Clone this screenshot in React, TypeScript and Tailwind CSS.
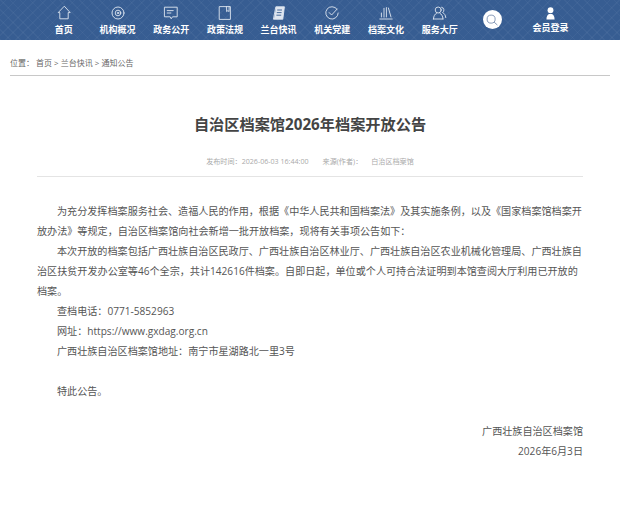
import type { ReactNode } from "react";

const cjk = "font-['Open_Sans','Noto_Sans_CJK_SC',sans-serif]";

function Ic({ children }: { children: ReactNode }) {
  return (
    <svg viewBox="0 0 16 16" className="h-[16px] w-[16px]" fill="none" stroke="#dfe6f0" strokeWidth="0.9" strokeLinejoin="round" strokeLinecap="round">
      {children}
    </svg>
  );
}

const navLeft: { name: string; icon: ReactNode }[] = [
  { name: "首页", icon: <path d="M8 1.5 2.2 7.600h1.600v6.200h8.400V7.600h1.600Z" /> },
  { name: "机构概况", icon: <><circle cx="8" cy="8" r="6" /><circle cx="8" cy="8" r="2.8" /><circle cx="8" cy="8" r="0.8" /></> },
  { name: "政务公开", icon: <><path d="M1.800 2.200h12.400v9.600H9.500l-1.300 2-1-2H1.800Z" /><path d="M4.200 5.600h6M4.200 8h3.600" /></> },
  { name: "政策法规", icon: <><path d="M2.600 1.600h10.800v12.800H2.600Z" /><path d="M9.600 1.600v5l1.300-1 1.200 1v-5" /></> },
  { name: "兰台快讯", icon: <><path d="M5.200 1.800h8.200l-1.600 12.400H2.800Z" fill="#dfe6f0" /><path d="M6.600 5h4M6.200 7.600h4M5.800 10.200h4" stroke="#365c91" /></> },
  { name: "机关党建", icon: <><path d="M13 4.200A6.200 6.200 0 1 0 14.200 8" /><path d="m5.200 7.600 2.400 2.400 5.600-6" /></> },
  { name: "档案文化", icon: <><path d="M1.800 14h12.400M3.400 12V8M6 12V3.400M8.400 12V2.600M10.400 3l2.600 9" /></> },
  { name: "服务大厅", icon: <><circle cx="6.200" cy="5" r="3" /><path d="M1.400 14c.3-3.200 1.400-5 3-5.600M11 14c-.3-3.200-1.400-5-3-5.600M1.400 14H11" /><path d="M9.600 2.200a3 3 0 0 1 1 5.400c1.700.7 2.900 2.400 3.200 5" /></> },
];

const paragraphs = [
  "为充分发挥档案服务社会、造福人民的作用\uFF0C根据《中华人民共和国档案法》及其实施条例\uFF0C以及《国家档案馆档案开放办法》等规定\uFF0C自治区档案馆向社会新增一批开放档案\uFF0C现将有关事项公告如下\uFF1A",
  "本次开放的档案包括广西壮族自治区民政厅、广西壮族自治区林业厅、广西壮族自治区农业机械化管理局、广西壮族自治区扶贫开发办公室等46个全宗\uFF0C共计142616件档案。自即日起\uFF0C单位或个人可持合法证明到本馆查阅大厅利用已开放的档案。",
  "查档电话\uFF1A0771-5852963",
  "网址\uFF1Ahttps://www.gxdag.org.cn",
  "广西壮族自治区档案馆地址\uFF1A南宁市星湖路北一里3号",
];

export default function App() {
  return (
    <div className={`h-[510px] w-[620px] overflow-hidden bg-white ${cjk}`}>
      <header className="flex h-[40px] bg-[#375d92] bg-[repeating-linear-gradient(45deg,rgba(255,255,255,0.035)_0_1px,transparent_1px_7px),repeating-linear-gradient(-45deg,rgba(255,255,255,0.035)_0_1px,transparent_1px_7px)] pl-[37px]">
        {navLeft.map((item) => (
          <a key={item.name} className="flex w-[53.7px] flex-col items-center pt-[5px]">
            <Ic>{item.icon}</Ic>
            <span className="mt-[2px] text-[9px] font-bold leading-[14px] whitespace-nowrap text-white">{item.name}</span>
          </a>
        ))}
        <div className="ml-[16px] mt-[10px] flex h-[19px] w-[19px] items-center justify-center rounded-full bg-white">
          <svg viewBox="0 0 16 16" className="h-[14px] w-[14px]" fill="none" stroke="#8296b5" strokeWidth="1.1">
            <circle cx="7" cy="7" r="4.6" />
            <path d="m10.400 10.400 3.800 3.400" />
          </svg>
        </div>
        <a className="ml-[29px] flex w-[40px] flex-col items-center pt-[7px]">
          <svg viewBox="0 0 16 16" className="h-[13px] w-[13px]" fill="white">
            <circle cx="8" cy="4" r="3.600" />
            <path d="M3 15.500c0-4.400 1.500-6.500 3.400-7h3.200c1.900.5 3.400 2.600 3.400 7Z" />
          </svg>
          <span className="mt-[1px] text-[9px] font-bold leading-[14px] whitespace-nowrap text-white">会员登录</span>
        </a>
      </header>

      <div className="mx-[10px] flex h-[36px] items-end border-b border-[#c8c8c8] pb-[6px] text-[8px] leading-[12px] text-[#666]">
        <span className="mr-[2px]">位置{"\uFF1A"}</span>
        <span>首页 &gt; 兰台快讯 &gt; 通知公告</span>
      </div>

      <h1 className="mt-[38px] text-center text-[15.2px] leading-[20px] font-bold text-[#444]">自治区档案馆2026年档案开放公告</h1>

      <div className="mx-[37px] mt-[20px] flex h-[23px] justify-center border-b border-[#e4e4e4] text-[7.1px] leading-[14px] text-[#aaa]">
        <span>发布时间{"\uFF1A"}2026-06-03 16:44:00</span>
        <span className="ml-[14px]">来源(作者){"\uFF1A"}</span>
        <span className="ml-[9px]">白治区档案馆</span>
      </div>

      <article className="mx-[37px] mt-[24px] text-[10.1px] leading-[20px] text-[#555]">
        {paragraphs.map((p) => (
          <p key={p} className="indent-[20px]">{p}</p>
        ))}
        <p className="h-[20px]" />
        <p className="indent-[20px]">特此公告。</p>
        <p className="h-[20px]" />
        <p className="text-right">广西壮族自治区档案馆</p>
        <p className="text-right">2026年6月3日</p>
      </article>
    </div>
  );
}
